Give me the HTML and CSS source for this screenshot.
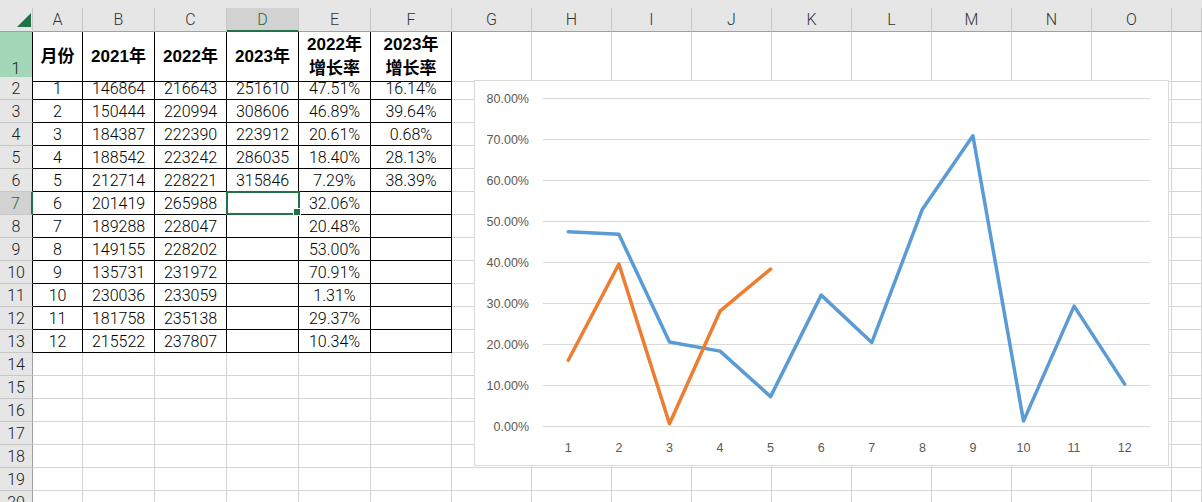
FILE: index.html
```html
<!DOCTYPE html>
<html lang="zh-CN">
<head>
<meta charset="utf-8">
<title>Sheet</title>
<link rel="stylesheet" href="styles.css">
</head>
<body>
<div class="sheet">
  <div class="strip"></div>
  <div class="row head">
    <div class="corner"><svg width="14" height="14" viewBox="0 0 14 14"><polygon points="14,0 14,14 0,14" fill="#217346"/></svg></div>
    <div class="ch">A</div><div class="ch">B</div><div class="ch">C</div><div class="ch sel">D</div><div class="ch">E</div><div class="ch">F</div>
    <div class="ch">G</div><div class="ch">H</div><div class="ch">I</div><div class="ch">J</div><div class="ch">K</div><div class="ch">L</div><div class="ch">M</div><div class="ch">N</div><div class="ch">O</div><div class="ch"></div>
  </div>
  <div class="row tall">
    <div class="rh tb hl">1</div>
    <div class="t b">月份</div><div class="t b">2021年</div><div class="t b">2022年</div><div class="t b">2023年</div>
    <div class="t b two">2022年<br>增长率</div><div class="t b two">2023年<br>增长率</div>
    <div></div><div></div><div></div><div></div><div></div><div></div><div></div><div></div><div></div><div></div>
  </div>
  <div class="row">
    <div class="rh tb">2</div>
    <div class="t">1</div><div class="t">146864</div><div class="t">216643</div><div class="t">251610</div><div class="t">47.51%</div><div class="t">16.14%</div>
    <div></div><div></div><div></div><div></div><div></div><div></div><div></div><div></div><div></div><div></div>
  </div>
  <div class="row">
    <div class="rh tb">3</div>
    <div class="t">2</div><div class="t">150444</div><div class="t">220994</div><div class="t">308606</div><div class="t">46.89%</div><div class="t">39.64%</div>
    <div></div><div></div><div></div><div></div><div></div><div></div><div></div><div></div><div></div><div></div>
  </div>
  <div class="row">
    <div class="rh tb">4</div>
    <div class="t">3</div><div class="t">184387</div><div class="t">222390</div><div class="t">223912</div><div class="t">20.61%</div><div class="t">0.68%</div>
    <div></div><div></div><div></div><div></div><div></div><div></div><div></div><div></div><div></div><div></div>
  </div>
  <div class="row">
    <div class="rh tb">5</div>
    <div class="t">4</div><div class="t">188542</div><div class="t">223242</div><div class="t">286035</div><div class="t">18.40%</div><div class="t">28.13%</div>
    <div></div><div></div><div></div><div></div><div></div><div></div><div></div><div></div><div></div><div></div>
  </div>
  <div class="row">
    <div class="rh tb">6</div>
    <div class="t">5</div><div class="t">212714</div><div class="t">228221</div><div class="t">315846</div><div class="t">7.29%</div><div class="t">38.39%</div>
    <div></div><div></div><div></div><div></div><div></div><div></div><div></div><div></div><div></div><div></div>
  </div>
  <div class="row">
    <div class="rh on">7</div>
    <div class="t">6</div><div class="t">201419</div><div class="t">265988</div><div class="t act"></div><div class="t">32.06%</div><div class="t"></div>
    <div></div><div></div><div></div><div></div><div></div><div></div><div></div><div></div><div></div><div></div>
  </div>
  <div class="row">
    <div class="rh tb">8</div>
    <div class="t">7</div><div class="t">189288</div><div class="t">228047</div><div class="t"></div><div class="t">20.48%</div><div class="t"></div>
    <div></div><div></div><div></div><div></div><div></div><div></div><div></div><div></div><div></div><div></div>
  </div>
  <div class="row">
    <div class="rh tb">9</div>
    <div class="t">8</div><div class="t">149155</div><div class="t">228202</div><div class="t"></div><div class="t">53.00%</div><div class="t"></div>
    <div></div><div></div><div></div><div></div><div></div><div></div><div></div><div></div><div></div><div></div>
  </div>
  <div class="row">
    <div class="rh tb">10</div>
    <div class="t">9</div><div class="t">135731</div><div class="t">231972</div><div class="t"></div><div class="t">70.91%</div><div class="t"></div>
    <div></div><div></div><div></div><div></div><div></div><div></div><div></div><div></div><div></div><div></div>
  </div>
  <div class="row">
    <div class="rh tb">11</div>
    <div class="t">10</div><div class="t">230036</div><div class="t">233059</div><div class="t"></div><div class="t">1.31%</div><div class="t"></div>
    <div></div><div></div><div></div><div></div><div></div><div></div><div></div><div></div><div></div><div></div>
  </div>
  <div class="row">
    <div class="rh tb">12</div>
    <div class="t">11</div><div class="t">181758</div><div class="t">235138</div><div class="t"></div><div class="t">29.37%</div><div class="t"></div>
    <div></div><div></div><div></div><div></div><div></div><div></div><div></div><div></div><div></div><div></div>
  </div>
  <div class="row">
    <div class="rh tb">13</div>
    <div class="t">12</div><div class="t">215522</div><div class="t">237807</div><div class="t"></div><div class="t">10.34%</div><div class="t"></div>
    <div></div><div></div><div></div><div></div><div></div><div></div><div></div><div></div><div></div><div></div>
  </div>
  <div class="row">
    <div class="rh">14</div>
    <div></div><div></div><div></div><div></div><div></div><div></div>
    <div></div><div></div><div></div><div></div><div></div><div></div><div></div><div></div><div></div><div></div>
  </div>
  <div class="row">
    <div class="rh">15</div>
    <div></div><div></div><div></div><div></div><div></div><div></div>
    <div></div><div></div><div></div><div></div><div></div><div></div><div></div><div></div><div></div><div></div>
  </div>
  <div class="row">
    <div class="rh">16</div>
    <div></div><div></div><div></div><div></div><div></div><div></div>
    <div></div><div></div><div></div><div></div><div></div><div></div><div></div><div></div><div></div><div></div>
  </div>
  <div class="row">
    <div class="rh">17</div>
    <div></div><div></div><div></div><div></div><div></div><div></div>
    <div></div><div></div><div></div><div></div><div></div><div></div><div></div><div></div><div></div><div></div>
  </div>
  <div class="row">
    <div class="rh">18</div>
    <div></div><div></div><div></div><div></div><div></div><div></div>
    <div></div><div></div><div></div><div></div><div></div><div></div><div></div><div></div><div></div><div></div>
  </div>
  <div class="row">
    <div class="rh">19</div>
    <div></div><div></div><div></div><div></div><div></div><div></div>
    <div></div><div></div><div></div><div></div><div></div><div></div><div></div><div></div><div></div><div></div>
  </div>
  <div class="row">
    <div class="rh">20</div>
    <div></div><div></div><div></div><div></div><div></div><div></div>
    <div></div><div></div><div></div><div></div><div></div><div></div><div></div><div></div><div></div><div></div>
  </div>

  <div class="chart">
    <svg class="plot" width="693" height="384" viewBox="475 81 693 384">
      <g class="grid">
        <line x1="543" y1="98.5" x2="1150" y2="98.5"/>
        <line x1="543" y1="139.5" x2="1150" y2="139.5"/>
        <line x1="543" y1="180.5" x2="1150" y2="180.5"/>
        <line x1="543" y1="221.5" x2="1150" y2="221.5"/>
        <line x1="543" y1="262.5" x2="1150" y2="262.5"/>
        <line x1="543" y1="303.5" x2="1150" y2="303.5"/>
        <line x1="543" y1="344.5" x2="1150" y2="344.5"/>
        <line x1="543" y1="385.5" x2="1150" y2="385.5"/>
        <line x1="543" y1="426.5" x2="1150" y2="426.5"/>
      </g>
      <g class="ylab">
        <text x="529" y="103">80.00%</text>
        <text x="529" y="144">70.00%</text>
        <text x="529" y="185">60.00%</text>
        <text x="529" y="226">50.00%</text>
        <text x="529" y="267">40.00%</text>
        <text x="529" y="308">30.00%</text>
        <text x="529" y="349">20.00%</text>
        <text x="529" y="390">10.00%</text>
        <text x="529" y="431">0.00%</text>
      </g>
      <g class="xlab">
        <text x="568.3" y="451.5">1</text>
        <text x="618.9" y="451.5">2</text>
        <text x="669.5" y="451.5">3</text>
        <text x="720.0" y="451.5">4</text>
        <text x="770.6" y="451.5">5</text>
        <text x="821.2" y="451.5">6</text>
        <text x="871.8" y="451.5">7</text>
        <text x="922.4" y="451.5">8</text>
        <text x="972.9" y="451.5">9</text>
        <text x="1023.5" y="451.5">10</text>
        <text x="1074.1" y="451.5">11</text>
        <text x="1124.7" y="451.5">12</text>
      </g>
      <polyline class="s1" points="568.3,231.7 618.9,234.3 669.5,342.0 720.0,351.1 770.6,396.6 821.2,295.1 871.8,342.5 922.4,209.2 972.9,135.8 1023.5,421.1 1074.1,306.1 1124.7,384.1"/>
      <polyline class="s2" points="568.3,360.3 618.9,264.0 669.5,423.7 720.0,311.2 770.6,269.1"/>
    </svg>
  </div>
</div>
</body>
</html>
```
FILE: styles.css
```css
* { box-sizing: border-box; }
html, body { margin: 0; padding: 0; }
body {
  width: 1202px;
  height: 502px;
  overflow: hidden;
  background: #fff;
  font-family: Roboto, "Liberation Sans", "Noto Sans CJK SC", sans-serif;
  font-weight: 300;
  color: #000;
}
.sheet { position: relative; width: 1202px; }
.strip { height: 8px; background: #e6e6e6; }
.row {
  display: grid;
  grid-template-columns: 33px 50px 72px 72px 72px 72px 81px repeat(9, 80px) 30px;
  height: 23px;
}
.row.head { height: 24px; }
.row.tall { height: 45px; }
.row > div {
  display: flex;
  align-items: center;
  justify-content: center;
  font-size: 16px;
  line-height: 20px;
  white-space: nowrap;
  border-right: 1px solid #d4d4d4;
  border-bottom: 1px solid #d4d4d4;
}
.row > .corner {
  background: #e6e6e6;
  border-right: 1px solid #c8c8c8;
  border-bottom: 1px solid #a0a0a0;
  justify-content: flex-end;
  align-items: flex-end;
  padding: 0 1px 4px 0;
}
.corner svg { display: block; }
.row > .ch {
  background: #e6e6e6;
  color: #333;
  border-right: 1px solid #c8c8c8;
  border-bottom: 1px solid #a0a0a0;
  padding-top: 1px;
}
.row > .ch.sel {
  background: #d2d2d2;
  color: #1d6b40;
  border-bottom: 2px solid #217346;
}
.row > .rh {
  background: #e6e6e6;
  color: #222;
  border-right: 1px solid #a0a0a0;
  border-bottom: 1px solid #c8c8c8;
  padding-top: 1px;
}
.row > .rh.tb { border-right-color: #000; }
.row > .rh.hl {
  background: #a2d7b7;
  align-items: flex-end;
  padding-bottom: 2px;
}
.row > .rh.on {
  background: #d2d2d2;
  color: #1d6b40;
  border-right: 2px solid #217346;
}
.row > .t {
  border-right-color: #000;
  border-bottom-color: #000;
  padding-top: 1px;
}
.row > .b {
  font-family: "Liberation Sans", "Noto Sans CJK SC", sans-serif;
  font-weight: bold;
  font-size: 17px;
}
.row > .two {
  display: block;
  text-align: center;
  line-height: 24px;
  padding-top: 1px;
}
.row > .act { position: relative; }
.act::before {
  content: "";
  position: absolute;
  left: -1px;
  top: -1px;
  right: -2px;
  bottom: -1px;
  border: 2px solid #217346;
}
.act::after {
  content: "";
  position: absolute;
  right: -3px;
  bottom: -2px;
  width: 6px;
  height: 6px;
  background: #217346;
  border: 1px solid #fff;
}
.chart {
  position: absolute;
  left: 474px;
  top: 80px;
  width: 695px;
  height: 386px;
  background: #fff;
  border: 1px solid #d9d9d9;
}
.plot { display: block; }
.grid line { stroke: #d9d9d9; stroke-width: 1; }
.ylab text {
  font-family: "Liberation Sans", sans-serif;
  font-weight: normal;
  font-size: 12.5px;
  fill: #595959;
  text-anchor: end;
}
.xlab text {
  font-family: "Liberation Sans", sans-serif;
  font-weight: normal;
  font-size: 12.5px;
  fill: #595959;
  text-anchor: middle;
}
.s1, .s2 {
  fill: none;
  stroke-width: 3.5;
  stroke-linejoin: round;
  stroke-linecap: round;
}
.s1 { stroke: #5b9bd5; }
.s2 { stroke: #ed7d31; }
```
